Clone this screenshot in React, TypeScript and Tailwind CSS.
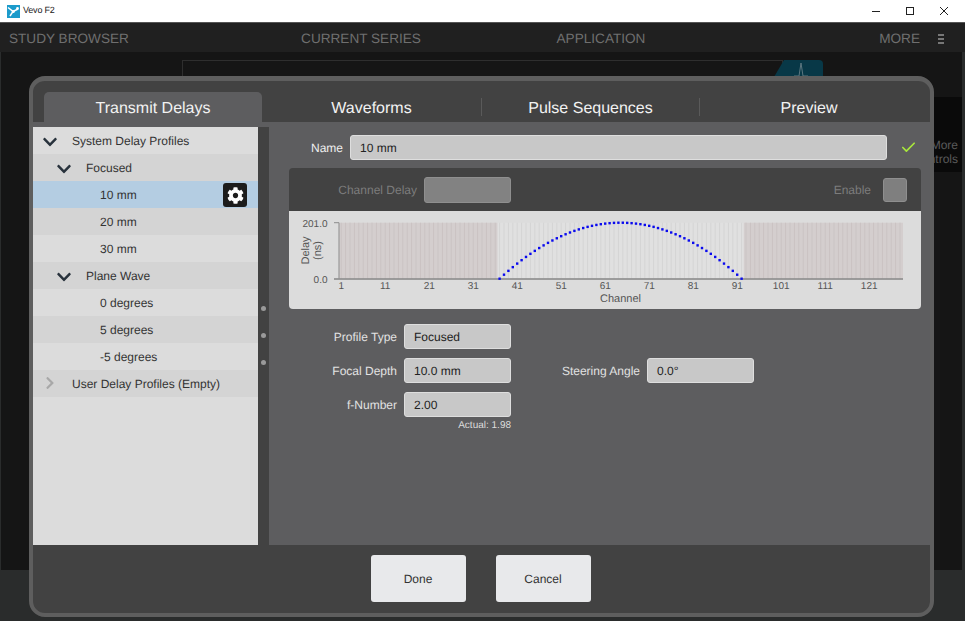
import React from "react";
import { FaChevronDown, FaChevronRight, FaCog } from "react-icons/fa";
import { Check } from "lucide-react";

const VevoLogo = () => (
  <svg width="13" height="13" viewBox="0 0 13 13" className="ml-[7px] shrink-0">
    <rect width="13" height="13" fill="#1c9bcb" />
    <path d="M1 2.5L6 6.5L3 11M6 6.5L11 4" stroke="#fff" strokeWidth="1.5" fill="none" />
    <circle cx="6.3" cy="6.5" r="1.5" fill="#fff" />
    <circle cx="10.5" cy="3.5" r="1.4" fill="#fff" />
  </svg>
);

const WindowControls = () => (
  <div className="ml-auto flex pr-[4px]">
    <div className="flex h-[22px] w-[34px] items-center justify-center">
      <svg width="10" height="10" viewBox="0 0 10 10">
        <path d="M1 5.5H9" stroke="#222" strokeWidth="1" />
      </svg>
    </div>
    <div className="flex h-[22px] w-[34px] items-center justify-center">
      <svg width="10" height="10" viewBox="0 0 10 10">
        <rect x="1.5" y="1.5" width="7" height="7" stroke="#222" strokeWidth="1" fill="none" />
      </svg>
    </div>
    <div className="flex h-[22px] w-[34px] items-center justify-center">
      <svg width="10" height="10" viewBox="0 0 10 10">
        <path d="M1 1L9 9M9 1L1 9" stroke="#222" strokeWidth="1" />
      </svg>
    </div>
  </div>
);

// channels are 4.4px wide, starting at the y axis
const CH = 4.4;
const AXIS_X = 50;
const TOP_Y = 11.7;
const BASE_Y = 67.7;
const channelX = (ch: number) => AXIS_X + (ch - 0.5) * CH;
const channels = Array.from({ length: 128 }, (_, i) => i + 1);
const activeChannels = channels.filter((c) => c >= 37 && c <= 92);
const ticks = [1, 11, 21, 31, 41, 51, 61, 71, 81, 91, 101, 111, 121];

const delayY = (ch: number) => {
  const d = (channelX(ch) - channelX(64.5)) / 121;
  return BASE_Y - (BASE_Y - TOP_Y) * (1 - d * d);
};

const DelayChart = () => (
  <svg width="632" height="98" viewBox="0 0 632 98" className="block">
    <rect x={AXIS_X} y={TOP_Y} width={564} height={56} fill="#e0e0e0" />
    <rect x={AXIS_X} y={TOP_Y} width={158.4} height={56} fill="#d4cece" />
    <rect x={AXIS_X + 404.8} y={TOP_Y} width={159.2} height={56} fill="#d4cece" />
    {channels.map((c) => (
      <rect
        key={c}
        x={channelX(c) - 0.5}
        y={TOP_Y}
        width={1}
        height={56}
        fill={c >= 37 && c <= 92 ? "#d4d4d4" : "#cac3c3"}
      />
    ))}
    <path d={`M45 ${TOP_Y}H50M50 ${TOP_Y}V${BASE_Y}`} stroke="#8c8c8c" strokeWidth="1" fill="none" />
    <rect x={45} y={BASE_Y - 0.5} width={569} height={1.6} fill="#8c8c8c" />
    {activeChannels.map((c) => (
      <rect key={c} x={channelX(c) - 1.2} y={delayY(c) - 1.2} width={2.4} height={2.4} fill="#0a0aee" />
    ))}
    <g fill="#555" fontSize="10">
      <text x="38.5" y="15.5" textAnchor="end">201.0</text>
      <text x="38.5" y="72" textAnchor="end">0.0</text>
      {ticks.map((t) => (
        <text key={t} x={channelX(t)} y="78" textAnchor="middle">{t}</text>
      ))}
    </g>
    <g fill="#555" fontSize="11">
      <text transform="translate(20 39.5) rotate(-90)" textAnchor="middle">Delay</text>
      <text transform="translate(32 39.5) rotate(-90)" textAnchor="middle">(ns)</text>
      <text x="331.5" y="90.5" textAnchor="middle">Channel</text>
    </g>
  </svg>
);

type Row = { label: string; level: 0 | 1 | 2; open?: boolean; selected?: boolean; muted?: boolean };

const rows: Row[] = [
  { label: "System Delay Profiles", level: 0, open: true },
  { label: "Focused", level: 1, open: true },
  { label: "10 mm", level: 2, selected: true },
  { label: "20 mm", level: 2 },
  { label: "30 mm", level: 2 },
  { label: "Plane Wave", level: 1, open: true },
  { label: "0 degrees", level: 2 },
  { label: "5 degrees", level: 2 },
  { label: "-5 degrees", level: 2 },
  { label: "User Delay Profiles (Empty)", level: 0, muted: true },
];

const TreeRow = ({ row, index }: { row: Row; index: number }) => {
  const bg = row.selected ? "bg-[#b4cde2]" : index % 2 === 0 ? "bg-[#dcdcdc]" : "bg-[#d4d4d4]";
  const indent = row.level === 0 ? "pl-[39px]" : row.level === 1 ? "pl-[53px]" : "pl-[67px]";
  const downAt = row.level === 0 ? "left-[8.5px]" : "left-[22.5px]";
  return (
    <div className={`relative flex h-[27px] items-center text-[12px] text-[#333] ${bg} ${indent}`}>
      {row.open && <FaChevronDown className={`absolute top-[6.5px] text-[16px] text-[#28323c] ${downAt}`} />}
      {row.muted && <FaChevronRight className="absolute left-[10px] top-[6px] text-[14px] text-[#a8a8a8]" />}
      {row.label}
      {row.selected && (
        <div className="absolute right-[11px] top-[2px] flex h-[24px] w-[24px] items-center justify-center rounded-[3px] bg-[#1c1c1c]">
          <FaCog className="text-[17px] text-white" />
        </div>
      )}
    </div>
  );
};

const Field = ({ label, value, w = "w-[115px]" }: { label: string; value: string; w?: string }) => (
  <div className="flex h-[25px] items-center">
    <div className={`${w} pr-[7px] text-right text-[12px] text-[#e2e2e2]`}>{label}</div>
    <div className="flex h-[25px] w-[107px] items-center rounded-[3px] border border-[#dedede] bg-[#c8c8c8] pl-[9px] text-[12px] text-[#222]">
      {value}
    </div>
  </div>
);

export default function App() {
  return (
    <div className="relative flex h-[621px] w-[965px] flex-col overflow-hidden bg-[#2a2c2c] [font-family:Liberation_Sans,Arial,sans-serif] [text-rendering:geometricPrecision]">
      <div className="flex h-[22px] items-center bg-white">
        <VevoLogo />
        <span className="ml-[3px] text-[9px] tracking-[-0.2px] text-[#222]">Vevo F2</span>
        <WindowControls />
      </div>
      <div className="h-px bg-[#555]" />

      <div className="grid h-[29px] grid-cols-[241px_240px_240px_1fr] items-center bg-[#202020] pt-[3px] text-[13.6px] text-[#6f6f6f]">
        <div className="pl-[9px]">STUDY BROWSER</div>
        <div className="text-center">CURRENT SERIES</div>
        <div className="text-center">APPLICATION</div>
        <div className="flex items-center justify-end pr-[21px]">
          <span>MORE</span>
          <div className="ml-[18px] flex flex-col gap-[2px]">
            <div className="h-[2px] w-[6px] bg-[#777]" />
            <div className="h-[2px] w-[6px] bg-[#777]" />
            <div className="h-[2px] w-[6px] bg-[#777]" />
          </div>
        </div>
      </div>

      <div className="ml-px mr-[3px] flex h-[518px] bg-[#151515]">
        <div className="flex flex-1 items-start pl-[181px] pt-[8px]">
          <div className="h-[100px] w-[601px] border border-[#2e2e2e]" />
          <svg width="49" height="40" viewBox="0 0 49 40" className="-ml-[9px]">
            <path d="M0 17L10 0H45Q49 0 49 4V40H0Z" fill="#083847" />
            <path d="M20 16L25 16L27 3L29 16L34 16" stroke="#5c7780" strokeWidth="1" fill="none" />
          </svg>
        </div>
        <div className="mt-[45px] h-[75px] w-[60px] bg-[#0a0a0a] pr-[4px] pt-[41px] text-right text-[12px] leading-[14px] text-[#5a5a5a]">
          More
          <br />
          Controls
        </div>
      </div>

      {/* dialog */}
      <div className="absolute left-[29px] top-[76px] flex h-[541px] w-[905px] flex-col rounded-[16px] border-4 border-t-[5px] border-[#5e5e5e] bg-[#424242]">
        <div className="grid h-[41px] grid-cols-[218px_219px_218px_219px] items-end pl-[11px]">
          <div className="flex h-[30px] items-center justify-center rounded-t-[5px] bg-[#5d5d5f] pt-[3px] text-[16px] text-[#f2f2f2]">
            Transmit Delays
          </div>
          <div className="flex h-[30px] items-center justify-center pt-[3px] text-[16px] text-[#f2f2f2]">Waveforms</div>
          <div className="flex h-[30px] items-center justify-center text-[16px] text-[#f2f2f2]">
            <span className="flex h-[18px] w-full items-center justify-center border-l border-[#5a5a5a] pt-[3px]">Pulse Sequences</span>
          </div>
          <div className="flex h-[30px] items-center justify-center text-[16px] text-[#f2f2f2]">
            <span className="flex h-[18px] w-full items-center justify-center border-l border-[#5a5a5a] pt-[3px]">Preview</span>
          </div>
        </div>

        <div className="flex h-[423px] bg-[#5d5d5f]">
          <div className="mt-[5px] flex">
            <div className="w-[225px] bg-[#dcdcdc]">
              {rows.map((row, i) => (
                <TreeRow key={row.label} row={row} index={i} />
              ))}
            </div>
            <div className="flex w-[11px] flex-col items-center gap-[22px] bg-[#424242] pt-[179px]">
              <div className="h-[5px] w-[5px] rounded-full bg-[#9a9a9a]" />
              <div className="h-[5px] w-[5px] rounded-full bg-[#9a9a9a]" />
              <div className="h-[5px] w-[5px] rounded-full bg-[#9a9a9a]" />
            </div>
          </div>

          <div className="flex-1 pl-[20px] pr-[9px] pt-[13px]">
            <div className="flex h-[25px] items-center">
              <div className="w-[54px] text-right text-[12px] text-[#eee]">Name</div>
              <div className="ml-[7px] flex h-[25px] w-[537px] items-center rounded-[3px] border border-[#dedede] bg-[#c8c8c8] pl-[9px] text-[12px] text-[#222]">
                10 mm
              </div>
              <Check className="ml-[13px] h-[17px] w-[17px] text-[#a8e63c]" strokeWidth={2.4} />
            </div>

            <div className="mt-[8px] flex h-[43px] items-center rounded-t-[4px] bg-[#424242]">
              <div className="w-[128px] text-right text-[12px] text-[#7c7c7c]">Channel Delay</div>
              <div className="ml-[7px] h-[26px] w-[87px] rounded-[3px] border border-[#8f8f8f] bg-[#828282]" />
              <div className="ml-auto text-[12px] text-[#7c7c7c]">Enable</div>
              <div className="ml-[12px] mr-[14px] mt-[1px] h-[24px] w-[24px] rounded-[3px] border border-[#8f8f8f] bg-[#7f7f7f]" />
            </div>

            <div className="rounded-b-[4px] bg-[#dcdcdc]">
              <DelayChart />
            </div>

            <div className="mt-[15px] flex flex-col gap-[9px]">
              <Field label="Profile Type" value="Focused" />
              <div className="flex">
                <Field label="Focal Depth" value="10.0 mm" />
                <div className="ml-[21px]">
                  <Field label="Steering Angle" value="0.0°" />
                </div>
              </div>
              <Field label="f-Number" value="2.00" />
            </div>
            <div className="w-[222px] pt-[2px] text-right text-[10px] leading-[14px] text-[#dcdcdc]">Actual: 1.98</div>
          </div>
        </div>

        <div className="flex flex-1 justify-center gap-[30px] pl-[1px] pr-[3px] pt-[10px]">
          <div className="flex h-[47px] w-[95px] items-center justify-center rounded-[3px] bg-[#e8e9eb] text-[12px] text-[#333]">
            Done
          </div>
          <div className="flex h-[47px] w-[95px] items-center justify-center rounded-[3px] bg-[#e8e9eb] text-[12px] text-[#333]">
            Cancel
          </div>
        </div>
      </div>
    </div>
  );
}
